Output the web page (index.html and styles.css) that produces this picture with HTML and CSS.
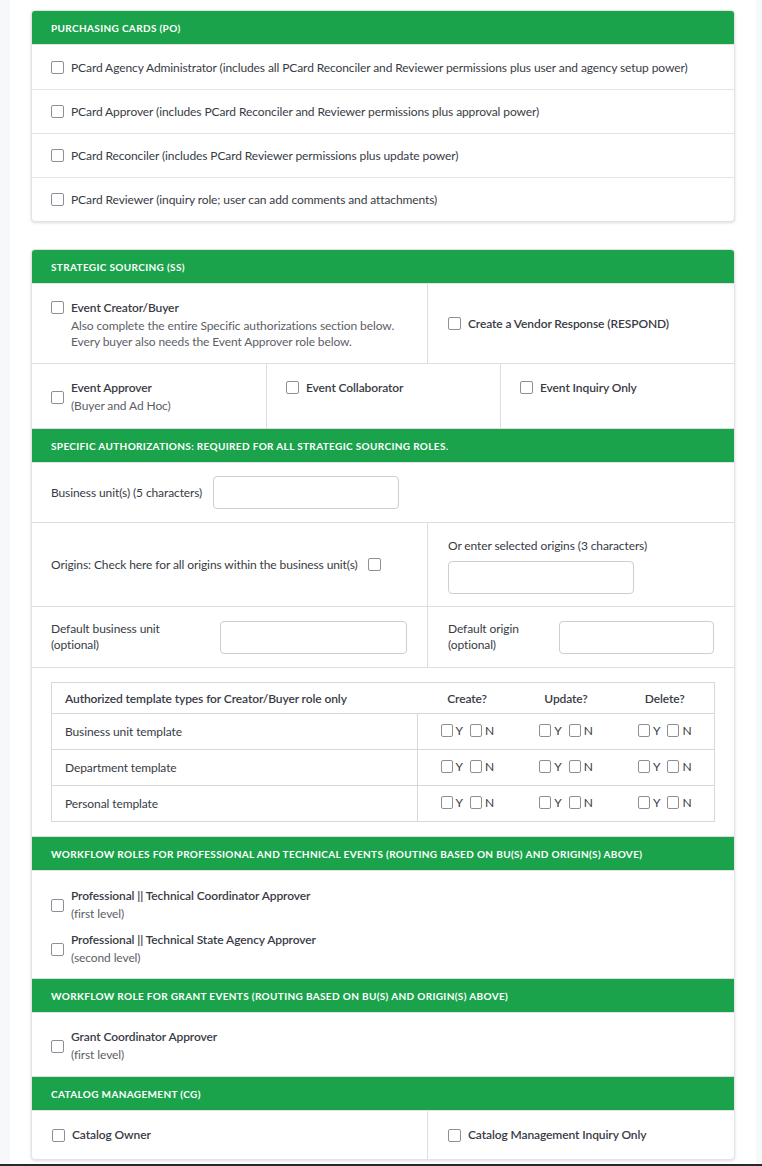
FILE: index.html
```html
<!DOCTYPE html>
<html lang="en">
<head>
<meta charset="utf-8">
<title>Roles</title>
<link rel="stylesheet" href="styles.css">
</head>
<body>
<div class="page">
  <section class="card">
    <div class="card-head">Purchasing Cards (PO)</div>
    <label class="line"><input type="checkbox" class="cb"><span>PCard Agency Administrator (includes all PCard Reconciler and Reviewer permissions plus user and agency setup power)</span></label>
    <label class="line"><input type="checkbox" class="cb"><span>PCard Approver (includes PCard Reconciler and Reviewer permissions plus approval power)</span></label>
    <label class="line"><input type="checkbox" class="cb"><span>PCard Reconciler (includes PCard Reviewer permissions plus update power)</span></label>
    <label class="line"><input type="checkbox" class="cb"><span>PCard Reviewer (inquiry role; user can add comments and attachments)</span></label>
  </section>

  <section class="card card-ss">
    <div class="card-head">Strategic Sourcing (SS)</div>
    <div class="split split-creator">
      <div class="cell cell-top">
        <label class="opt"><input type="checkbox" class="cb"><span class="opt-text"><span class="opt-title">Event Creator/Buyer</span><span class="opt-sub">Also complete the entire Specific authorizations section below.<br>Every buyer also needs the Event Approver role below.</span></span></label>
      </div>
      <div class="cell cell-center">
        <label class="opt opt-center"><input type="checkbox" class="cb"><span class="opt-title">Create a Vendor Response (RESPOND)</span></label>
      </div>
    </div>
    <div class="thirds">
      <div class="cell cell-approver">
        <label class="opt opt-center"><input type="checkbox" class="cb"><span class="opt-text"><span class="opt-title">Event Approver</span><span class="opt-sub">(Buyer and Ad Hoc)</span></span></label>
      </div>
      <div class="cell cell-approver">
        <label class="opt"><input type="checkbox" class="cb"><span class="opt-title">Event Collaborator</span></label>
      </div>
      <div class="cell cell-approver">
        <label class="opt"><input type="checkbox" class="cb"><span class="opt-title">Event Inquiry Only</span></label>
      </div>
    </div>

    <div class="card-head">Specific authorizations: required for all strategic sourcing roles.</div>
    <div class="field-row">
      <span class="lbl">Business unit(s) (5 characters)</span>
      <input type="text" class="txt txt-bu">
    </div>
    <div class="split split-origins">
      <div class="cell cell-origins-l">
        <span class="lbl">Origins: Check here for all origins within the business unit(s)</span>
        <input type="checkbox" class="cb">
      </div>
      <div class="cell cell-origins-r">
        <span class="lbl">Or enter selected origins (3 characters)</span>
        <input type="text" class="txt txt-origin">
      </div>
    </div>
    <div class="split split-default">
      <div class="cell cell-default">
        <span class="lbl lbl-dbu">Default business unit<br>(optional)</span>
        <input type="text" class="txt txt-fill">
      </div>
      <div class="cell cell-default">
        <span class="lbl lbl-dor">Default origin<br>(optional)</span>
        <input type="text" class="txt txt-fill">
      </div>
    </div>
    <div class="table-wrap">
      <table class="tpl">
        <thead>
          <tr><th class="th-name">Authorized template types for Creator/Buyer role only</th><th>Create?</th><th>Update?</th><th>Delete?</th></tr>
        </thead>
        <tbody>
          <tr><td class="td-name">Business unit template</td>
            <td class="td-yn first"><span class="yn"><input type="checkbox" class="cb cb-sm">Y<input type="checkbox" class="cb cb-sm cb-n">N</span></td>
            <td class="td-yn"><span class="yn"><input type="checkbox" class="cb cb-sm">Y<input type="checkbox" class="cb cb-sm cb-n">N</span></td>
            <td class="td-yn"><span class="yn"><input type="checkbox" class="cb cb-sm">Y<input type="checkbox" class="cb cb-sm cb-n">N</span></td></tr>
          <tr><td class="td-name">Department template</td>
            <td class="td-yn first"><span class="yn"><input type="checkbox" class="cb cb-sm">Y<input type="checkbox" class="cb cb-sm cb-n">N</span></td>
            <td class="td-yn"><span class="yn"><input type="checkbox" class="cb cb-sm">Y<input type="checkbox" class="cb cb-sm cb-n">N</span></td>
            <td class="td-yn"><span class="yn"><input type="checkbox" class="cb cb-sm">Y<input type="checkbox" class="cb cb-sm cb-n">N</span></td></tr>
          <tr><td class="td-name">Personal template</td>
            <td class="td-yn first"><span class="yn"><input type="checkbox" class="cb cb-sm">Y<input type="checkbox" class="cb cb-sm cb-n">N</span></td>
            <td class="td-yn"><span class="yn"><input type="checkbox" class="cb cb-sm">Y<input type="checkbox" class="cb cb-sm cb-n">N</span></td>
            <td class="td-yn"><span class="yn"><input type="checkbox" class="cb cb-sm">Y<input type="checkbox" class="cb cb-sm cb-n">N</span></td></tr>
        </tbody>
      </table>
    </div>

    <div class="card-head">Workflow roles for professional and technical events (routing based on BU(s) and origin(s) above)</div>
    <div class="stack">
      <label class="opt opt-center"><input type="checkbox" class="cb"><span class="opt-text"><span class="opt-title">Professional || Technical Coordinator Approver</span><span class="opt-sub">(first level)</span></span></label>
      <label class="opt opt-center"><input type="checkbox" class="cb"><span class="opt-text"><span class="opt-title">Professional || Technical State Agency Approver</span><span class="opt-sub">(second level)</span></span></label>
    </div>

    <div class="card-head">Workflow role for grant events (routing based on BU(s) and origin(s) above)</div>
    <div class="stack stack-grant">
      <label class="opt opt-center"><input type="checkbox" class="cb"><span class="opt-text"><span class="opt-title">Grant Coordinator Approver</span><span class="opt-sub">(first level)</span></span></label>
    </div>

    <div class="card-head">Catalog Management (CG)</div>
    <div class="split split-catalog">
      <div class="cell cell-center">
        <label class="opt opt-center"><input type="checkbox" class="cb"><span class="opt-title">Catalog Owner</span></label>
      </div>
      <div class="cell cell-center">
        <label class="opt opt-center"><input type="checkbox" class="cb"><span class="opt-title">Catalog Management Inquiry Only</span></label>
      </div>
    </div>
  </section>
</div>
<div class="footer-bar"></div>
</body>
</html>
```

FILE: styles.css
```css
* { box-sizing: border-box; }

html, body {
  margin: 0;
  padding: 0;
}

body {
  background: #f7f8fa;
  font-family: Lato, "Open Sans", sans-serif;
  font-size: 12px;
  letter-spacing: -0.1px;
  color: #383b45;
}

.page {
  margin-left: 10px;
  width: 746px;
  background: #ffffff;
  padding: 10px 21px 4px;
}

.footer-bar {
  height: 3px;
  background: #26282c;
}

.card {
  background: #ffffff;
  border: 1px solid #e1e3e7;
  border-radius: 4px;
  box-shadow: 0 1px 3px rgba(0, 0, 0, 0.14);
  overflow: hidden;
}

.card-ss {
  margin-top: 27px;
}

.card-head {
  background: #1aa34b;
  color: #ffffff;
  font-size: 10px;
  font-weight: 700;
  text-transform: uppercase;
  letter-spacing: 0.35px;
  height: 34px;
  padding: 0 19px;
  display: flex;
  align-items: center;
  border-bottom: 1px solid #e1e3e7;
}

.cb {
  -webkit-appearance: none;
  appearance: none;
  width: 13px;
  height: 13px;
  margin: 0;
  border: 1px solid #8d8f94;
  border-radius: 2px;
  background: #ffffff;
  flex: none;
}

.line {
  display: flex;
  align-items: center;
  gap: 7px;
  height: 44px;
  padding: 0 19px;
  border-top: 1px solid #e1e3e7;
}
.card-head + .line { border-top: none; }

.split {
  display: grid;
  grid-template-columns: 395px minmax(0, 1fr);
  border-bottom: 1px solid #dcdee2;
}
.split > .cell + .cell { border-left: 1px solid #dcdee2; }

.thirds {
  display: grid;
  grid-template-columns: 234px 234px minmax(0, 1fr);
  border-bottom: 1px solid #dcdee2;
}
.thirds > .cell + .cell { border-left: 1px solid #dcdee2; }

.cell {
  padding: 0 19px;
}

.split-creator { height: 80px; }
.cell-top { padding-top: 16px; }
.cell-center { display: flex; align-items: center; padding-left: 20px; }

.cell-approver { padding-top: 16px; height: 64px; }

.opt {
  display: flex;
  align-items: flex-start;
  gap: 7px;
}
.opt > .cb { margin-top: 1px; }
.opt-center { align-items: center; }
.opt-center > .cb { margin-top: 0; }

.opt-text {
  display: flex;
  flex-direction: column;
}
.opt-title {
  font-weight: 600;
  color: #383b45;
  line-height: 16px;
}
.opt-sub {
  color: #5d6068;
  line-height: 16px;
  margin-top: 2px;
}

.lbl {
  color: #383b45;
  line-height: 16px;
}

.txt {
  height: 33px;
  border: 1px solid #ccced3;
  border-radius: 4px;
  background: #ffffff;
  font: inherit;
  padding: 0 8px;
}

.field-row {
  display: flex;
  align-items: center;
  gap: 11px;
  height: 60px;
  padding: 0 19px;
  border-bottom: 1px solid #dcdee2;
}
.txt-bu { width: 186px; }

.split-origins { height: 84px; }
.cell-origins-l {
  display: flex;
  align-items: center;
  gap: 10px;
  padding-left: 19px;
}
.cell-origins-r {
  display: flex;
  flex-direction: column;
  gap: 7px;
  padding-top: 15px;
  padding-left: 20px;
}
.txt-origin { width: 186px; }

.split-default { height: 61px; }
.cell-default {
  display: flex;
  align-items: center;
  padding-left: 19px;
  padding-right: 20px;
}
.cell-default + .cell-default { padding-left: 20px; }
.lbl-dbu { width: 169px; flex: none; }
.lbl-dor { width: 111px; flex: none; }
.txt-fill { flex: 1; width: 0; min-width: 0; }

.table-wrap {
  padding: 14px 19px 14px;
  border-bottom: 1px solid #dcdee2;
}

.tpl {
  width: 100%;
  border-collapse: collapse;
  border: 1px solid #d6d8dd;
}
.tpl th {
  font-weight: 600;
  height: 31px;
  padding: 0;
  text-align: center;
  width: 99px;
  border-bottom: 1px solid #d6d8dd;
}
.tpl th.th-name {
  text-align: left;
  padding-left: 13px;
  width: auto;
}
.tpl td {
  height: 36px;
  border-bottom: 1px solid #d6d8dd;
  padding: 0;
}
.tpl td.td-name { padding-left: 13px; }
.tpl td.td-yn { text-align: center; }
.tpl td.first { border-left: 1px solid #d6d8dd; }

.yn {
  display: inline-flex;
  align-items: center;
  gap: 3px;
  font-size: 12px;
  color: #383b45;
}
.cb-sm { width: 12px; height: 13px; }
.cb-n { margin-left: 4px; }

.stack {
  display: flex;
  flex-direction: column;
  gap: 10px;
  padding: 17px 19px 12px;
  border-bottom: 1px solid #dcdee2;
}
.stack-grant { padding-top: 16px; padding-bottom: 13px; }

.split-catalog { height: 48px; border-bottom: none; }
```
